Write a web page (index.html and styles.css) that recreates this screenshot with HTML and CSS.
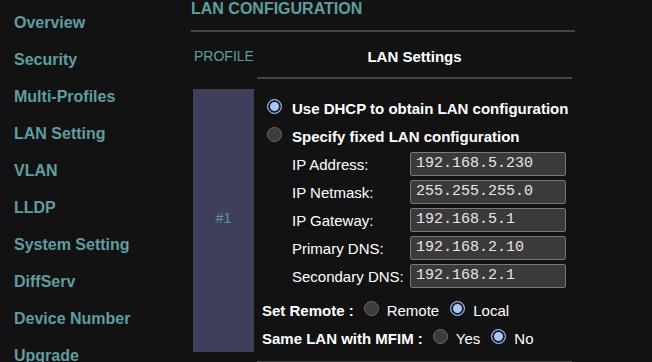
FILE: index.html
```html
<!DOCTYPE html>
<html>
<head>
<meta charset="utf-8">
<link rel="stylesheet" href="styles.css">
</head>
<body>
<div class="app">
  <nav class="sidebar">
    <div class="nav-item">Overview</div>
    <div class="nav-item">Security</div>
    <div class="nav-item">Multi-Profiles</div>
    <div class="nav-item">LAN Setting</div>
    <div class="nav-item">VLAN</div>
    <div class="nav-item">LLDP</div>
    <div class="nav-item">System Setting</div>
    <div class="nav-item">DiffServ</div>
    <div class="nav-item">Device Number</div>
    <div class="nav-item">Upgrade</div>
  </nav>
  <main class="main">
    <h1 class="title">LAN CONFIGURATION</h1>
    <div class="table">
      <div class="th-profile">PROFILE</div>
      <div class="th-settings">LAN Settings</div>
      <div class="profile-cell">#1</div>
      <div class="settings-cell">
        <div class="opt"><span class="radio checked"></span><span class="opt-text">Use DHCP to obtain LAN configuration</span></div>
        <div class="opt"><span class="radio"></span><span class="opt-text">Specify fixed LAN configuration</span></div>
        <div class="field"><span class="field-label">IP Address:</span><span class="input">192.168.5.230</span></div>
        <div class="field"><span class="field-label">IP Netmask:</span><span class="input">255.255.255.0</span></div>
        <div class="field"><span class="field-label">IP Gateway:</span><span class="input">192.168.5.1</span></div>
        <div class="field"><span class="field-label">Primary DNS:</span><span class="input">192.168.2.10</span></div>
        <div class="field"><span class="field-label">Secondary DNS:</span><span class="input">192.168.2.1</span></div>
        <div class="choice first"><span class="choice-label">Set Remote :</span><span class="radio sm"></span><span class="choice-text">Remote</span><span class="radio sm checked"></span><span class="choice-text">Local</span></div>
        <div class="choice"><span class="choice-label">Same LAN with MFIM :</span><span class="radio sm"></span><span class="choice-text">Yes</span><span class="radio sm checked"></span><span class="choice-text">No</span></div>
      </div>
    </div>
  </main>
</div>
</body>
</html>
```
FILE: styles.css
```css
* { box-sizing: border-box; }
html, body {
  margin: 0;
  padding: 0;
  background: #121212;
  height: 362px;
  overflow: hidden;
}
body {
  font-family: "Liberation Sans", Arial, sans-serif;
  color: #ffffff;
}
.app {
  display: flex;
  align-items: flex-start;
}
.sidebar {
  width: 191px;
  flex: none;
  padding-top: 4px;
  padding-left: 14px;
}
.nav-item {
  font-size: 16px;
  font-weight: bold;
  line-height: 37px;
  color: #5f9ea0;
  white-space: nowrap;
}
.main {
  width: 384px;
  flex: none;
}
.title {
  margin: 0;
  font-size: 16px;
  font-weight: bold;
  line-height: 17px;
  color: #5f9ea0;
  padding-bottom: 13px;
  border-bottom: 2px solid #464646;
}
.table {
  display: grid;
  grid-template-columns: 61px 315px;
  column-gap: 3px;
  margin-left: 2px;
}
.th-profile {
  font-size: 14px;
  line-height: 17px;
  color: #5f9ea0;
  padding: 16px 0 12px 1px;
}
.th-settings {
  font-size: 15px;
  font-weight: bold;
  line-height: 17px;
  text-align: center;
  padding: 16px 0 12px;
  border-bottom: 2px solid #464646;
}
.profile-cell {
  background: #3f3f5b;
  margin: 10px 0 11px;
  display: flex;
  align-items: center;
  justify-content: center;
  font-size: 14px;
  color: #5a9a90;
  padding-bottom: 6px;
}
.settings-cell {
  padding: 15px 0 9px;
  border-bottom: 2px solid #464646;
}
.opt {
  display: flex;
  align-items: center;
  height: 28px;
  padding-left: 10px;
}
.opt-text {
  font-size: 15px;
  font-weight: bold;
  margin-left: 10px;
  white-space: nowrap;
}
.radio {
  width: 15px;
  height: 15px;
  flex: none;
  border-radius: 50%;
  background: #3c3c3c;
  border: 1px solid #6b6b6b;
  margin-bottom: 3px;
}
.radio.checked {
  background: #a8c7fa;
  border: 1px solid #8fb6f5;
  box-shadow: inset 0 0 0 2px #1c1c1c;
}
.field {
  display: flex;
  align-items: center;
  height: 28px;
  padding-left: 35px;
}
.field:nth-child(3) { margin-top: 0; }
.field-label {
  width: 118px;
  flex: none;
  font-size: 15px;
  white-space: nowrap;
}
.input {
  width: 156px;
  height: 24px;
  background: #3a3a3a;
  border: 1px solid #7a7a7a;
  border-radius: 2px;
  font-family: "Liberation Mono", "Courier New", monospace;
  font-size: 15px;
  line-height: 22px;
  color: #e6e6e6;
  padding-left: 5px;
}
.choice {
  display: flex;
  align-items: center;
  height: 28px;
  padding-left: 5px;
}
.choice.first { margin-top: 6px; }
.choice-label {
  font-size: 15px;
  font-weight: bold;
  white-space: nowrap;
}
.radio.sm { margin-left: 10px; }
.choice-label + .radio.sm { margin-left: 10px; }
.choice-text {
  font-size: 15px;
  margin-left: 8px;
  white-space: nowrap;
}
.choice-text + .radio.sm { margin-left: 11px; }
```
